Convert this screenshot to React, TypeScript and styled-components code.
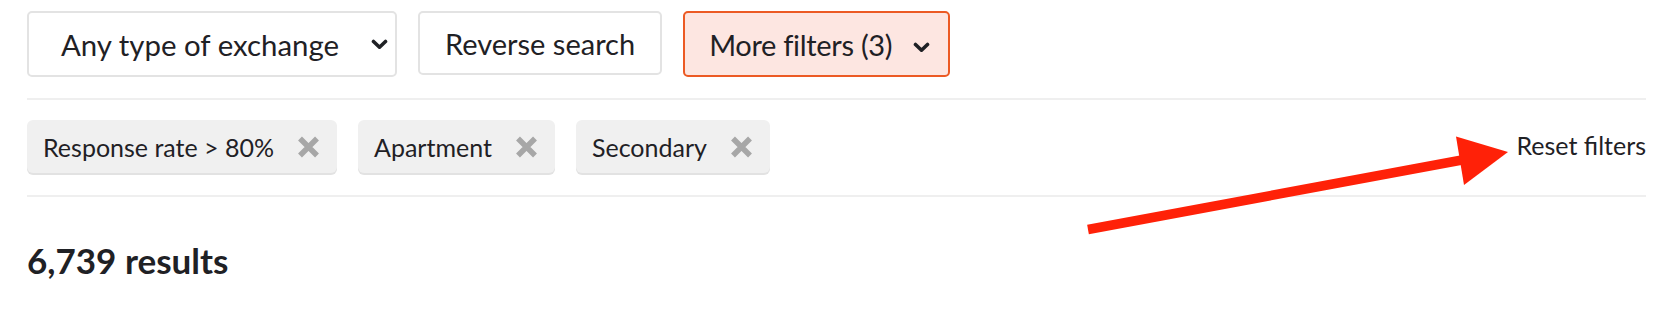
import React from 'react';
import styled, { createGlobalStyle } from 'styled-components';

const GlobalStyle = createGlobalStyle`
  body {
    margin: 0;
    background: #ffffff;
    font-family: Lato, "Noto Sans", sans-serif;
    color: #1f2125;
  }
`;

const Page = styled.div`
  position: relative;
  width: 1672px;
  height: 322px;
  box-sizing: border-box;
  padding: 11px 26px 0 27px;
  overflow: hidden;
`;

const Toolbar = styled.div`
  display: flex;
  align-items: flex-start;
  gap: 21px;
  padding-bottom: 21px;
  border-bottom: 2px solid #efefef;
`;

const SelectBox = styled.div`
  box-sizing: border-box;
  width: 370px;
  height: 66px;
  display: flex;
  align-items: center;
  justify-content: space-between;
  padding: 0 7px 0 32px;
  border: 2px solid #e3e3e3;
  border-radius: 5px;
  font-size: 29.4px;
`;

const FilterButton = styled.div<{ $active?: boolean }>`
  box-sizing: border-box;
  height: ${(p) => (p.$active ? '66px' : '64px')};
  display: flex;
  align-items: center;
  gap: 21px;
  padding: ${(p) => (p.$active ? '0 18px 0 24px' : '0 25px')};
  border: 2px solid ${(p) => (p.$active ? '#ec5a24' : '#e3e3e3')};
  background: ${(p) => (p.$active ? '#fde6e1' : '#ffffff')};
  border-radius: 5px;
  font-size: 29px;
  letter-spacing: ${(p) => (p.$active ? '-0.3px' : '0')};
`;

const Chevron = styled.svg<{ $shift?: number }>`
  width: 17px;
  height: 11px;
  flex: none;
  transform: translateY(${(p) => p.$shift ?? 0}px);
`;

const ChipRow = styled.div`
  display: flex;
  align-items: flex-start;
  gap: 21px;
  padding: 20px 0 22px;
  border-bottom: 2px solid #efefef;
`;

const Chip = styled.div`
  box-sizing: border-box;
  height: 53px;
  display: flex;
  align-items: center;
  gap: 23px;
  padding: 0 17px 0 16px;
  background: #f0f0f0;
  border-radius: 6px;
  box-shadow: 0 2px 0 #e2e2e2;
  font-size: 25px;
`;

const CloseIcon = styled.svg`
  width: 23px;
  height: 22px;
  flex: none;
`;

const ResetLink = styled.div`
  margin-left: auto;
  align-self: center;
  font-size: 25px;
  margin-top: -4px;
`;

const Results = styled.h2`
  margin: 42px 0 0;
  font-size: 35px;
  font-weight: 700;
  line-height: 1.2;
`;

const Overlay = styled.svg`
  position: absolute;
  top: 0;
  left: 0;
  width: 1672px;
  height: 322px;
  pointer-events: none;
`;

const ChevronDown = ({ shift }: { shift?: number }) => (
  <Chevron viewBox="0 0 17 11" $shift={shift}>
    <path d="M2.5 2.5 L8.5 8.2 L14.5 2.5" fill="none" stroke="#1f2125" strokeWidth="3.6" strokeLinecap="round" strokeLinejoin="round" />
  </Chevron>
);

const Close = () => (
  <CloseIcon viewBox="0 0 23 22">
    <path d="M3 2.5 L20 19.5 M20 2.5 L3 19.5" fill="none" stroke="#a7a7a7" strokeWidth="5.5" />
  </CloseIcon>
);

const chips = ['Response rate > 80%', 'Apartment', 'Secondary'];

function App() {
  return (
    <Page>
      <GlobalStyle />
      <Toolbar>
        <SelectBox>
          <span>Any type of exchange</span>
          <ChevronDown />
        </SelectBox>
        <FilterButton>Reverse search</FilterButton>
        <FilterButton $active>
          <span>More filters (3)</span>
          <ChevronDown shift={3} />
        </FilterButton>
      </Toolbar>

      <ChipRow>
        {chips.map((chip) => (
          <Chip key={chip}>
            <span>{chip}</span>
            <Close />
          </Chip>
        ))}
        <ResetLink>Reset filters</ResetLink>
      </ChipRow>

      <Results>6,739 results</Results>

      <Overlay viewBox="0 0 1672 322">
        <line x1="1088" y1="229.5" x2="1462" y2="160" stroke="#ff2108" strokeWidth="9.5" />
        <polygon points="1456,136.5 1508,152 1464,185" fill="#ff2108" />
      </Overlay>
    </Page>
  );
}

export default App;
